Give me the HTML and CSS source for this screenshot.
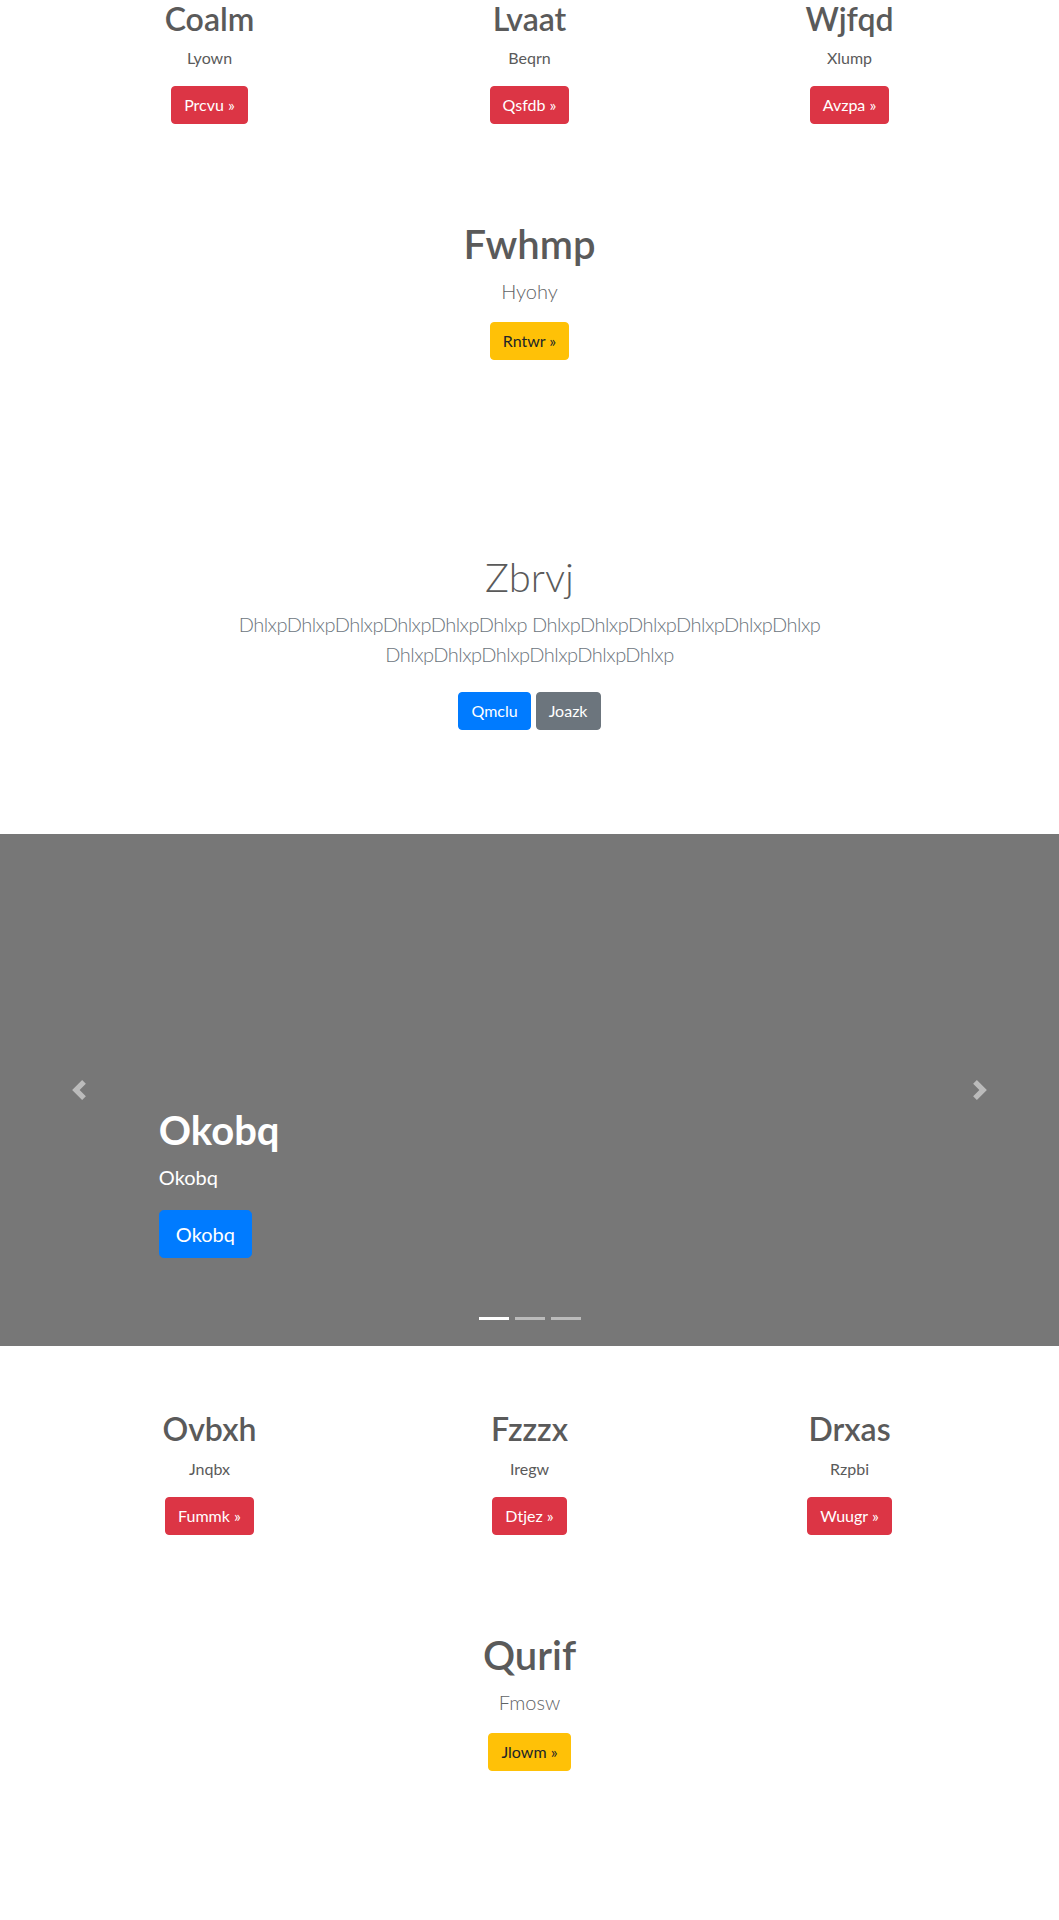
FILE: index.html
```html
<!DOCTYPE html>
<html lang="en">
<head>
<meta charset="utf-8">
<title>Page</title>
<link rel="stylesheet" href="styles.css">
</head>
<body>
<section class="cols">
  <div class="container grid3">
    <div class="col">
      <h2>Coalm</h2>
      <p>Lyown</p>
      <p class="btn-line"><a class="btn btn-danger" href="#">Prcvu &raquo;</a></p>
    </div>
    <div class="col">
      <h2>Lvaat</h2>
      <p>Beqrn</p>
      <p class="btn-line"><a class="btn btn-danger" href="#">Qsfdb &raquo;</a></p>
    </div>
    <div class="col">
      <h2>Wjfqd</h2>
      <p>Xlump</p>
      <p class="btn-line"><a class="btn btn-danger" href="#">Avzpa &raquo;</a></p>
    </div>
  </div>
</section>

<section class="feature">
  <h1>Fwhmp</h1>
  <p class="lead">Hyohy</p>
  <p class="btn-line"><a class="btn btn-warning" href="#">Rntwr &raquo;</a></p>
</section>

<section class="jumbo">
  <div class="jumbo-inner">
    <h1 class="jumbo-heading">Zbrvj</h1>
    <p class="lead muted">DhlxpDhlxpDhlxpDhlxpDhlxpDhlxp DhlxpDhlxpDhlxpDhlxpDhlxpDhlxp DhlxpDhlxpDhlxpDhlxpDhlxpDhlxp</p>
    <p class="jumbo-btns">
      <a class="btn btn-primary" href="#">Qmclu</a>
      <a class="btn btn-secondary" href="#">Joazk</a>
    </p>
  </div>
</section>

<div class="carousel">
  <ol class="indicators">
    <li class="active"></li>
    <li></li>
    <li></li>
  </ol>
  <div class="caption">
    <h1>Okobq</h1>
    <p class="cap-text">Okobq</p>
    <p class="cap-btn"><a class="btn btn-lg btn-primary" href="#">Okobq</a></p>
  </div>
  <a class="control control-prev" href="#" aria-label="Previous">
    <svg class="control-icon" viewBox="0 0 8 8" width="20" height="20"><path fill="#fff" d="M5.25 0l-4 4 4 4 1.5-1.5-2.5-2.5 2.5-2.5-1.5-1.5z"/></svg>
  </a>
  <a class="control control-next" href="#" aria-label="Next">
    <svg class="control-icon" viewBox="0 0 8 8" width="20" height="20"><path fill="#fff" d="M2.75 0l-1.5 1.5 2.5 2.5-2.5 2.5 1.5 1.5 4-4-4-4z"/></svg>
  </a>
</div>

<section class="cols">
  <div class="container grid3">
    <div class="col">
      <h2>Ovbxh</h2>
      <p>Jnqbx</p>
      <p class="btn-line"><a class="btn btn-danger" href="#">Fummk &raquo;</a></p>
    </div>
    <div class="col">
      <h2>Fzzzx</h2>
      <p>Iregw</p>
      <p class="btn-line"><a class="btn btn-danger" href="#">Dtjez &raquo;</a></p>
    </div>
    <div class="col">
      <h2>Drxas</h2>
      <p>Rzpbi</p>
      <p class="btn-line"><a class="btn btn-danger" href="#">Wuugr &raquo;</a></p>
    </div>
  </div>
</section>

<section class="feature">
  <h1>Qurif</h1>
  <p class="lead">Fmosw</p>
  <p class="btn-line"><a class="btn btn-warning" href="#">Jlowm &raquo;</a></p>
</section>
</body>
</html>
```
FILE: styles.css
```css
* { box-sizing: border-box; }
html, body { margin: 0; padding: 0; }
body {
  font-family: Lato, "Open Sans", "Liberation Sans", sans-serif;
  font-size: 16px;
  line-height: 1.5;
  color: #5a5a5a;
  background: #fff;
}
h1, h2, p { margin-top: 0; }
h1 { font-size: 40px; line-height: 1.2; font-weight: 600; margin-bottom: 8px; }
h2 { font-size: 32px; line-height: 1.2; font-weight: 600; margin-bottom: 8px; }
p { margin-bottom: 16px; }

.container { width: 960px; margin: 0 auto; }
.grid3 { display: grid; grid-template-columns: repeat(3, 1fr); }
.col { padding: 0 15px; text-align: center; }

.btn-line { line-height: 1.5; }

.btn {
  display: inline-block;
  font-size: 16px;
  line-height: 1.5;
  padding: 6px 12px;
  border: 1px solid transparent;
  border-radius: 4px;
  text-decoration: none;
  font-weight: 400;
  vertical-align: middle;
}
.btn-lg { font-size: 20px; padding: 8px 16px; border-radius: 4.8px; }
.btn-danger { background: #dc3545; border-color: #dc3545; color: #fff; }
.btn-warning { background: #ffc107; border-color: #ffc107; color: #212529; }
.btn-primary { background: #007bff; border-color: #007bff; color: #fff; }
.btn-secondary { background: #6c757d; border-color: #6c757d; color: #fff; }

.lead { font-size: 20px; font-weight: 300; line-height: 1.5; }
.muted { color: #6c757d; }

.feature { text-align: center; padding: 80px 0 129px; }
.feature .lead { color: #5f6366; }

.jumbo { text-align: center; padding: 48px 0 96px; }
.jumbo-inner { max-width: 700px; margin: 0 auto; padding: 0 15px; }
.jumbo-heading { font-weight: 300; }
.jumbo .lead { margin-bottom: 15px; letter-spacing: -0.5px; }
.jumbo-btns { display: flex; justify-content: center; gap: 5px; margin: 0; }
.jumbo-btns .btn { margin: 8px 0; }

.carousel {
  position: relative;
  height: 512px;
  background: #777;
  margin-bottom: 64px;
}
.caption {
  position: absolute;
  left: 15%;
  right: 15%;
  bottom: 48px;
  padding: 20px 0;
  color: #fff;
  text-align: left;
  z-index: 10;
}
.caption h1 { margin-bottom: 8px; font-weight: 700; }
.cap-text { font-size: 20px; line-height: 1.5; margin-bottom: 18px; }
.cap-btn { margin-bottom: 20px; line-height: 1; }
.cap-btn .btn { vertical-align: top; }

.control {
  position: absolute;
  top: 0;
  bottom: 0;
  width: 15%;
  display: flex;
  align-items: center;
  justify-content: center;
  opacity: .5;
}
.control-prev { left: 0; }
.control-next { right: 0; }
.control-icon { display: block; width: 20px; height: 20px; }

.indicators {
  position: absolute;
  left: 15%;
  right: 15%;
  bottom: 26px;
  margin: 0;
  padding: 0;
  list-style: none;
  display: flex;
  justify-content: center;
  z-index: 15;
}
.indicators li {
  width: 30px;
  height: 3px;
  margin: 0 3px;
  background: #fff;
  opacity: .5;
}
.indicators li.active { opacity: 1; }
```
